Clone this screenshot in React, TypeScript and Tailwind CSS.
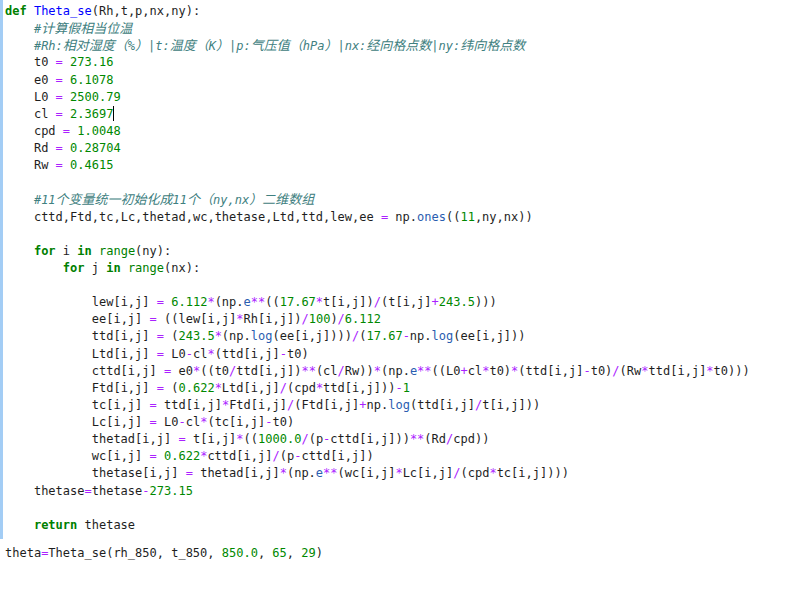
import React from "react";

const cellLines: string[] = [
  "def Theta_se(Rh,t,p,nx,ny):",
  "    #计算假相当位温",
  "    #Rh:相对湿度（%）|t:温度（K）|p:气压值（hPa）|nx:经向格点数|ny:纬向格点数",
  "    t0 = 273.16",
  "    e0 = 6.1078",
  "    L0 = 2500.79",
  "    cl = 2.3697",
  "    cpd = 1.0048",
  "    Rd = 0.28704",
  "    Rw = 0.4615",
  "",
  "    #11个变量统一初始化成11个（ny,nx）二维数组",
  "    cttd,Ftd,tc,Lc,thetad,wc,thetase,Ltd,ttd,lew,ee = np.ones((11,ny,nx))",
  "",
  "    for i in range(ny):",
  "        for j in range(nx):",
  "",
  "            lew[i,j] = 6.112*(np.e**((17.67*t[i,j])/(t[i,j]+243.5)))",
  "            ee[i,j] = ((lew[i,j]*Rh[i,j])/100)/6.112",
  "            ttd[i,j] = (243.5*(np.log(ee[i,j])))/(17.67-np.log(ee[i,j]))",
  "            Ltd[i,j] = L0-cl*(ttd[i,j]-t0)",
  "            cttd[i,j] = e0*((t0/ttd[i,j])**(cl/Rw))*(np.e**((L0+cl*t0)*(ttd[i,j]-t0)/(Rw*ttd[i,j]*t0)))",
  "            Ftd[i,j] = (0.622*Ltd[i,j]/(cpd*ttd[i,j]))-1",
  "            tc[i,j] = ttd[i,j]*Ftd[i,j]/(Ftd[i,j]+np.log(ttd[i,j]/t[i,j]))",
  "            Lc[i,j] = L0-cl*(tc[i,j]-t0)",
  "            thetad[i,j] = t[i,j]*((1000.0/(p-cttd[i,j]))**(Rd/cpd))",
  "            wc[i,j] = 0.622*cttd[i,j]/(p-cttd[i,j])",
  "            thetase[i,j] = thetad[i,j]*(np.e**(wc[i,j]*Lc[i,j]/(cpd*tc[i,j])))",
  "    thetase=thetase-273.15",
  "",
  "    return thetase",
];

const keywords = ["def", "for", "in", "return"];
const builtins = ["range"];

// splits CJK runs out so they can get the slightly bigger size
function Comment({ text }: { text: string }) {
  const parts = text.split(/([\u3000-\u9fff\uff00-\uffef]+)/);
  return (
    <span className="italic text-[#408080]">
      {parts.map((p, i) =>
        /[\u3000-\u9fff\uff00-\uffef]/.test(p) ? (
          <span key={i} className="text-[13px]">
            {p}
          </span>
        ) : (
          <span key={i}>{p}</span>
        )
      )}
    </span>
  );
}

function highlight(line: string) {
  const out: React.ReactNode[] = [];
  const re = /(#.*$)|([A-Za-z_]\w*)|(\d+(?:\.\d+)?)|(\*\*|[=+\-*/])|(\s+)|(.)/g;
  let m: RegExpExecArray | null;
  let prev = "";
  let k = 0;
  while ((m = re.exec(line))) {
    const [tok, comment, ident, num, op] = m;
    if (comment) {
      out.push(<Comment key={k++} text={comment} />);
    } else if (ident) {
      if (keywords.includes(ident)) {
        out.push(
          <span key={k++} className="font-bold text-[#008000]">
            {ident}
          </span>
        );
      } else if (builtins.includes(ident)) {
        out.push(
          <span key={k++} className="text-[#008000]">
            {ident}
          </span>
        );
      } else if (prev === "def") {
        out.push(
          <span key={k++} className="text-[#0000ff]">
            {ident}
          </span>
        );
      } else if (prev === ".") {
        out.push(
          <span key={k++} className="text-[#2a5db0]">
            {ident}
          </span>
        );
      } else {
        out.push(<span key={k++}>{ident}</span>);
      }
    } else if (num) {
      out.push(
        <span key={k++} className="text-[#008800]">
          {num}
        </span>
      );
    } else if (op) {
      out.push(
        <span key={k++} className="text-[#aa22ff]">
          {op}
        </span>
      );
    } else {
      out.push(<span key={k++}>{tok}</span>);
    }
    if (!/^\s+$/.test(tok)) prev = tok;
  }
  return out;
}

export default function App() {
  return (
    <div
      className="w-[800px] h-[592px] bg-white text-[12px] text-[#1e1e1e] overflow-hidden"
      style={{ fontFamily: '"DejaVu Sans Mono", "Noto Sans CJK SC", monospace' }}
    >
      <div className="flex">
        <div className="w-[3px] bg-[#a3cdf5]" />
        <div className="pl-[2px] pt-[3px] pb-[5px]">
          {cellLines.map((line, i) => (
            <div key={i} className="h-[17.13px] leading-[17.13px] whitespace-pre">
              {highlight(line)}
              {i === 6 && (
                <span className="inline-block w-px h-[15px] bg-black align-middle -mt-[2px]" />
              )}
            </div>
          ))}
        </div>
      </div>
      <div className="pl-[5px] pt-[6.5px] h-[24px] leading-[17.13px] whitespace-pre">
        <span>theta</span>
        <span className="text-[#aa22ff]">=</span>
        <span>Theta_se(rh_850, t_850, </span>
        <span className="text-[#008800]">850.0</span>
        <span>, </span>
        <span className="text-[#008800]">65</span>
        <span>, </span>
        <span className="text-[#008800]">29</span>
        <span>)</span>
      </div>
    </div>
  );
}
